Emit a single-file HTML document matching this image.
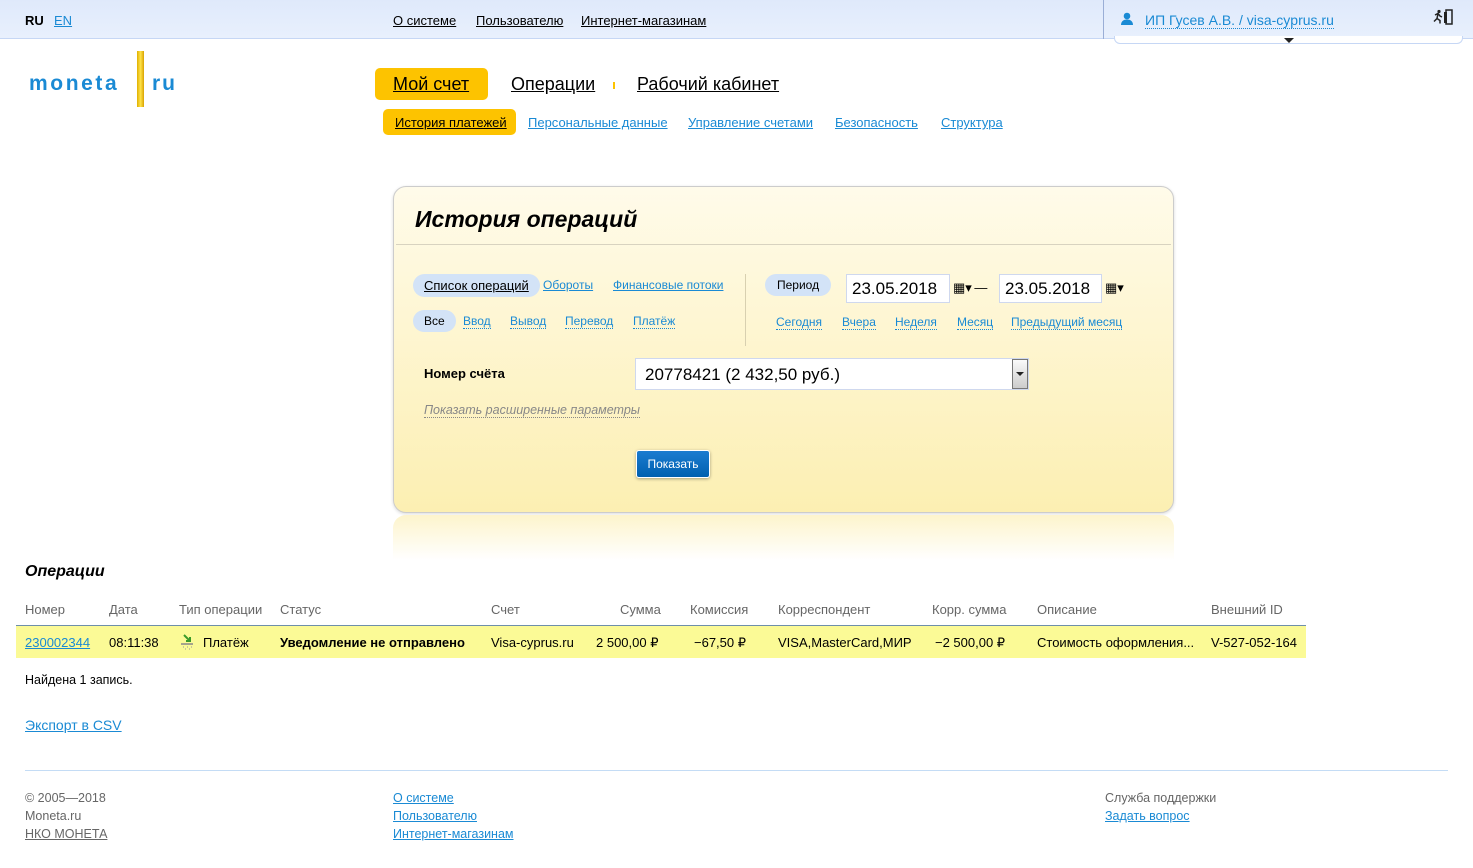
<!DOCTYPE html>
<html><head><meta charset="utf-8"><style>
*{margin:0;padding:0;box-sizing:border-box}
body{width:1473px;height:868px;position:relative;background:#fff;font-family:"Liberation Sans",Arial,sans-serif;font-size:13px;color:#000;overflow:hidden}
.a{position:absolute;white-space:nowrap}
a{color:#1a8ad4;text-decoration:underline}
.k{color:#000}
.dot{text-decoration:none;border-bottom:1px dotted #1a8ad4;color:#1a8ad4}
.pill{background:#d3e3f7;border-radius:12px;padding:4px 11px}
.th{color:#666;top:602px}
.td{top:635px}
</style></head><body>
<!-- top bar -->
<div class="a" style="left:0;top:0;width:1473px;height:39px;background:linear-gradient(#dfe9fb,#e8f0fd);border-bottom:1px solid #c6d7f5"></div>
<div class="a" style="left:1103px;top:0;width:1px;height:39px;background:#9aaed6"></div>
<div class="a" style="left:1114px;top:36px;width:349px;height:8px;border:1px solid #c6d7f5;border-top:none;border-radius:0 0 6px 6px;background:#fff"></div>
<div class="a" style="left:1284px;top:38px;width:0;height:0;border-left:5px solid transparent;border-right:5px solid transparent;border-top:5px solid #222"></div>
<div class="a" style="left:25px;top:13px;font-weight:bold">RU</div>
<a class="a" style="left:54px;top:13px" href="#">EN</a>
<a class="a k" style="left:393px;top:13px" href="#">О системе</a>
<a class="a k" style="left:476px;top:13px" href="#">Пользователю</a>
<a class="a k" style="left:581px;top:13px" href="#">Интернет-магазинам</a>
<svg class="a" style="left:1120px;top:12px" width="14" height="14" viewBox="0 0 14 14"><circle cx="7" cy="4" r="3.3" fill="#1a8ad4"/><path d="M1 13c0-4 3-5.5 6-5.5s6 1.5 6 5.5z" fill="#1a8ad4"/></svg>
<span class="a dot" style="left:1145px;top:12px;font-size:14px">ИП Гусев А.В. / visa-cyprus.ru</span>
<svg class="a" style="left:1432px;top:9px" width="22" height="16" viewBox="0 0 22 16"><circle cx="7" cy="2.5" r="1.6" fill="#222"/><path d="M3 6l3-1.5 2 2.5 2 1M6 4.5l-1 5-3 3M5 9.5l3 2 0 3" stroke="#222" stroke-width="1.5" fill="none"/><rect x="14" y="1" width="6" height="14" fill="none" stroke="#222" stroke-width="1.5"/><rect x="12" y="3" width="3" height="11" fill="#222"/></svg>
<!-- logo -->
<div class="a" style="left:29px;top:72px;font-size:21px;font-weight:bold;color:#1a8ad4;letter-spacing:2.6px">moneta</div>
<div class="a" style="left:137px;top:51px;width:7px;height:56px;background:linear-gradient(90deg,#e0b000,#ffe34a,#d9a300)"></div>
<div class="a" style="left:152px;top:72px;font-size:21px;font-weight:bold;color:#1a8ad4;letter-spacing:2px">ru</div>
<!-- main tabs -->
<div class="a" style="left:375px;top:68px;width:113px;height:32px;background:#fdc300;border-radius:5px"></div>
<a class="a k" style="left:393px;top:74px;font-size:18px" href="#">Мой счет</a>
<a class="a k" style="left:511px;top:74px;font-size:18px" href="#">Операции</a>
<div class="a" style="left:613px;top:82px;width:2px;height:7px;background:#fdc300"></div>
<a class="a k" style="left:637px;top:74px;font-size:18px" href="#">Рабочий кабинет</a>
<div class="a" style="left:383px;top:109px;width:133px;height:26px;background:#fdc300;border-radius:5px"></div>
<a class="a k" style="left:395px;top:115px" href="#">История платежей</a>
<a class="a" style="left:528px;top:115px" href="#">Персональные данные</a>
<a class="a" style="left:688px;top:115px" href="#">Управление счетами</a>
<a class="a" style="left:835px;top:115px" href="#">Безопасность</a>
<a class="a" style="left:941px;top:115px" href="#">Структура</a>
<!-- panel -->
<div class="a" style="left:393px;top:186px;width:781px;height:327px;border:1px solid #ccc;border-radius:13px;background:linear-gradient(#fffbea,#fcefb2);box-shadow:0 1px 3px rgba(0,0,0,.15)"></div>
<div class="a" style="left:393px;top:515px;width:781px;height:50px;border-radius:13px 13px 0 0;background:linear-gradient(#fdf4cc,#fff 90%)"></div>
<div class="a" style="left:415px;top:206px;font-size:23px;font-weight:bold;font-style:italic">История операций</div>
<div class="a" style="left:396px;top:244px;width:775px;height:1px;background:#d8d3c0"></div>
<span class="a pill" style="left:413px;top:274px"><a class="k" href="#">Список операций</a></span>
<a class="a" style="left:543px;top:278px;font-size:12px" href="#">Обороты</a>
<a class="a" style="left:613px;top:278px;font-size:12px" href="#">Финансовые потоки</a>
<span class="a pill" style="left:413px;top:310px;font-size:12px">Все</span>
<span class="a dot" style="left:463px;top:314px;font-size:12px">Ввод</span>
<span class="a dot" style="left:510px;top:314px;font-size:12px">Вывод</span>
<span class="a dot" style="left:565px;top:314px;font-size:12px">Перевод</span>
<span class="a dot" style="left:633px;top:314px;font-size:12px">Платёж</span>
<div class="a" style="left:745px;top:274px;width:1px;height:72px;background:#d8d0b0"></div>
<span class="a pill" style="left:765px;top:274px;font-size:12px;padding:4px 12px">Период</span>
<div class="a" style="left:846px;top:274px;width:104px;height:29px;background:#fff;border:1px solid #cfd8ee;font-size:17px;padding:4px 5px">23.05.2018</div>
<div class="a" style="left:953px;top:280px;font-size:13px">&#x25A6;&#x25BE;&thinsp;—</div>
<div class="a" style="left:999px;top:274px;width:103px;height:29px;background:#fff;border:1px solid #cfd8ee;font-size:17px;padding:4px 5px">23.05.2018</div>
<div class="a" style="left:1105px;top:280px;font-size:13px">&#x25A6;&#x25BE;</div>
<span class="a dot" style="left:776px;top:315px;font-size:12px">Сегодня</span>
<span class="a dot" style="left:842px;top:315px;font-size:12px">Вчера</span>
<span class="a dot" style="left:895px;top:315px;font-size:12px">Неделя</span>
<span class="a dot" style="left:957px;top:315px;font-size:12px">Месяц</span>
<span class="a dot" style="left:1011px;top:315px;font-size:12px">Предыдущий месяц</span>
<div class="a" style="left:424px;top:366px;font-weight:bold">Номер счёта</div>
<div class="a" style="left:635px;top:358px;width:394px;height:32px;background:#fff;border:1px solid #cfd8ee;font-size:17px;padding:6px 9px">20778421 (2 432,50 руб.)</div>
<div class="a" style="left:1012px;top:359px;width:16px;height:30px;border:1px solid #777;background:linear-gradient(#fafafa,#ccc)"></div>
<div class="a" style="left:1016px;top:372px;border-left:4px solid transparent;border-right:4px solid transparent;border-top:4px solid #222"></div>
<span class="a" style="left:424px;top:403px;font-size:12.5px;font-style:italic;color:#888;border-bottom:1px dotted #888">Показать расширенные параметры</span>
<div class="a" style="left:636px;top:450px;width:74px;height:28px;background:linear-gradient(#1b7cd0,#0060b0);border:1px solid #fff;box-shadow:0 1px 3px rgba(0,0,0,.35);border-radius:3px;color:#fff;font-size:12px;text-align:center;line-height:26px">Показать</div>
<!-- table -->
<div class="a" style="left:25px;top:563px;font-size:16px;font-weight:bold;font-style:italic">Операции</div>
<div class="a" style="left:16px;top:625px;width:1290px;height:33px;background:#fbfa96;border-top:1px solid #6e8faa"></div>
<div class="a th" style="left:25px">Номер</div>
<div class="a th" style="left:109px">Дата</div>
<div class="a th" style="left:179px">Тип операции</div>
<div class="a th" style="left:280px">Статус</div>
<div class="a th" style="left:491px">Счет</div>
<div class="a th" style="left:620px">Сумма</div>
<div class="a th" style="left:690px">Комиссия</div>
<div class="a th" style="left:778px">Корреспондент</div>
<div class="a th" style="left:932px">Корр. сумма</div>
<div class="a th" style="left:1037px">Описание</div>
<div class="a th" style="left:1211px">Внешний ID</div>
<a class="a td" style="left:25px" href="#">230002344</a>
<div class="a td" style="left:109px">08:11:38</div>
<svg class="a" style="left:180px;top:634px" width="14" height="16" viewBox="0 0 14 16"><path d="M4 1l6 6M10 3v4H6" stroke="#3a9a2a" stroke-width="2" fill="none"/><path d="M1 10h12" stroke="#888" stroke-width="1.5"/><path d="M3 13h1M7 13h1M11 13h1M5 15h1M9 15h1" stroke="#999"/></svg>
<div class="a td" style="left:203px">Платёж</div>
<div class="a td" style="left:280px;font-weight:bold">Уведомление не отправлено</div>
<div class="a td" style="left:491px">Visa-cyprus.ru</div>
<div class="a td" style="left:596px">2 500,00 ₽</div>
<div class="a td" style="left:694px">−67,50 ₽</div>
<div class="a td" style="left:778px">VISA,MasterCard,МИР</div>
<div class="a td" style="left:935px">−2 500,00 ₽</div>
<div class="a td" style="left:1037px">Стоимость оформления...</div>
<div class="a td" style="left:1211px">V-527-052-164</div>
<div class="a" style="left:25px;top:673px;font-size:12.5px">Найдена 1 запись.</div>
<a class="a" style="left:25px;top:717px;font-size:14px" href="#">Экспорт в CSV</a>
<!-- footer -->
<div class="a" style="left:25px;top:770px;width:1423px;height:1px;background:#c4dcf5"></div>
<div class="a" style="left:25px;top:789px;color:#666;font-size:12.5px;line-height:18px">© 2005—2018<br>Moneta.ru<br><a href="#" style="color:#666">НКО МОНЕТА</a></div>
<div class="a" style="left:393px;top:789px;font-size:12.5px;line-height:18px"><a href="#">О системе</a><br><a href="#">Пользователю</a><br><a href="#">Интернет-магазинам</a></div>
<div class="a" style="left:1105px;top:789px;font-size:12.5px;line-height:18px;color:#666">Служба поддержки<br><a href="#">Задать вопрос</a></div>
</body></html>
